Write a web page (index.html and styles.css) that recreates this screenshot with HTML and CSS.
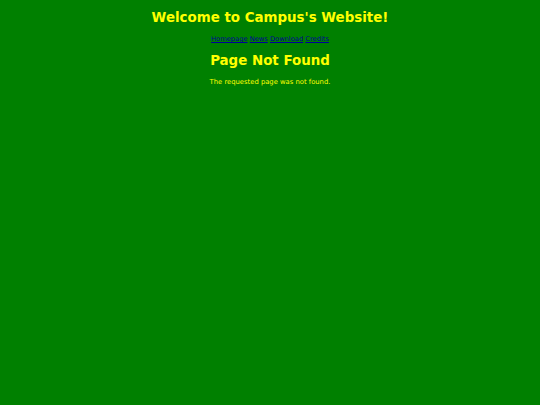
FILE: index.html
```html
<!DOCTYPE html>
<html>
<head>
<meta charset="utf-8">
<link rel="stylesheet" href="styles.css">
</head>
<body>
<h1 class="title">Welcome to Campus's Website!</h1>
<nav class="nav"><a href="#">Homepage</a> <a href="#">News</a> <a href="#">Download</a> <a href="#">Credits</a></nav>
<h2 class="heading">Page Not Found</h2>
<p class="msg">The requested page was not found.</p>
</body>
</html>
```
FILE: styles.css
```css
html, body {
  margin: 0;
  padding: 0;
  background: #008000;
}
body {
  font-family: "DejaVu Sans", Verdana, sans-serif;
  color: #ffff00;
  text-align: center;
  padding-top: 10px;
}
.title {
  font-size: 13.4px;
  font-weight: bold;
  margin: 0 0 9px;
  line-height: 16px;
}
.nav {
  font-size: 6.7px;
  line-height: 9px;
}
.nav a {
  color: #000099;
}
.heading {
  font-size: 13.4px;
  font-weight: bold;
  margin: 9px 0 9px;
  line-height: 16px;
}
.msg {
  font-size: 6.8px;
  margin: 0;
  line-height: 9px;
}
```
